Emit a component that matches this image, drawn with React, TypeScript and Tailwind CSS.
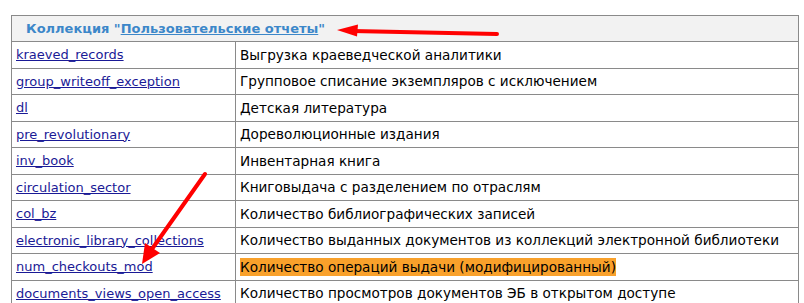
const rows: { code: string; title: string; mark?: boolean }[] = [
  { code: "kraeved_records", title: "Выгрузка краеведческой аналитики" },
  { code: "group_writeoff_exception", title: "Групповое списание экземпляров с исключением" },
  { code: "dl", title: "Детская литература" },
  { code: "pre_revolutionary", title: "Дореволюционные издания" },
  { code: "inv_book", title: "Инвентарная книга" },
  { code: "circulation_sector", title: "Книговыдача с разделением по отраслям" },
  { code: "col_bz", title: "Количество библиографических записей" },
  { code: "electronic_library_collections", title: "Количество выданных документов из коллекций электронной библиотеки" },
  { code: "num_checkouts_mod", title: "Количество операций выдачи (модифицированный)", mark: true },
  { code: "documents_views_open_access", title: "Количество просмотров документов ЭБ в открытом доступе" },
];

export default function App() {
  return (
    <div className="relative w-[804px] h-[303px] overflow-hidden bg-white font-['DejaVu_Sans',sans-serif] text-black">
      <div className="ml-[11px] mt-[15px] w-[788px] border border-[#8a8a8a]">
        <div className="h-[26px] flex items-center bg-[#f2f2f2] border-b border-[#8a8a8a] pl-[14px] font-bold text-[#3c87c9] text-[13px]">
          <span>
            Коллекция "<a className="underline">Пользовательские отчеты</a>"
          </span>
        </div>
        {rows.map((r) => (
          <div key={r.code} className="h-[26.5px] flex border-b border-[#8a8a8a]">
            <div className="w-[224px] shrink-0 flex items-center pl-[4px] border-r border-[#8a8a8a] text-[13px]">
              <a className="underline text-[#1a1a96]">{r.code}</a>
            </div>
            <div className="flex items-center pl-[4px] text-[13.6px] whitespace-nowrap">
              <span className={r.mark ? "bg-[#f9a12b] leading-[18px]" : ""}>{r.title}</span>
            </div>
          </div>
        ))}
      </div>

      {/* red annotation arrows */}
      <svg className="absolute left-0 top-0" width="804" height="303" viewBox="0 0 804 303">
        <line x1="497" y1="34" x2="352" y2="31" stroke="#ff0000" strokeWidth="4" strokeLinecap="round" />
        <polygon points="337,30 358,24.5 357,36.5" fill="#ff0000" />
        <line x1="205" y1="174" x2="152" y2="249" stroke="#ff0000" strokeWidth="4" strokeLinecap="round" />
        <polygon points="142,264 145,243 160,253" fill="#ff0000" />
      </svg>
    </div>
  );
}
